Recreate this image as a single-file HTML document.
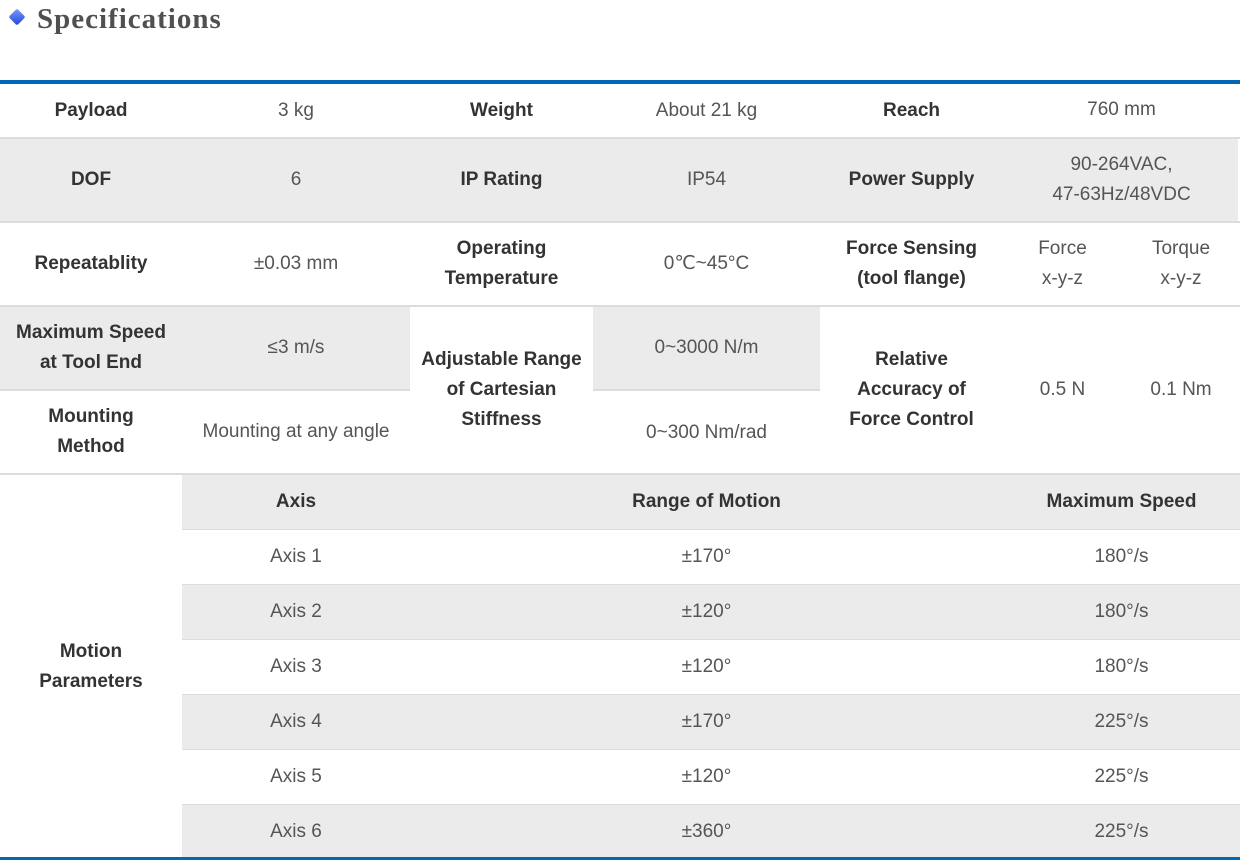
<!DOCTYPE html>
<html><head><meta charset="utf-8"><style>
body{margin:0;width:1240px;height:861px;background:#fff;position:relative;overflow:hidden;font-family:"Liberation Sans","DejaVu Sans",sans-serif;}
.c{position:absolute;display:flex;align-items:center;justify-content:center;text-align:center;font-size:19px;line-height:30px;color:#555;box-sizing:border-box;}
.b{font-weight:bold;color:#333;font-size:19px;}
.g{background:#ebebeb;}
.h{position:absolute;left:0;width:1240px;height:2px;background:#dcdcdc;}
</style></head><body>
<div style="position:absolute;left:11px;top:11px;width:12px;height:12px;background:linear-gradient(135deg,#7a9cff,#2146d8);transform:rotate(45deg);border-radius:2px"></div>
<div style="position:absolute;left:37px;top:3px;font-family:'Liberation Serif',serif;font-weight:bold;font-size:29px;color:#505050;letter-spacing:1px">Specifications</div>
<div style="position:absolute;left:0;top:80px;width:1240px;height:4px;background:#0068b7"></div>

<!-- row1 -->
<div class="c b" style="left:0;top:84px;width:182px;height:53px">Payload</div>
<div class="c" style="left:182px;top:84px;width:228px;height:53px">3 kg</div>
<div class="c b" style="left:410px;top:84px;width:183px;height:53px">Weight</div>
<div class="c" style="left:593px;top:84px;width:227px;height:53px">About 21 kg</div>
<div class="c b" style="left:820px;top:84px;width:183px;height:53px">Reach</div>
<div class="c" style="left:1003px;top:84px;width:237px;height:51px">760 mm</div>
<div class="h" style="top:137px"></div>
<!-- row2 -->
<div class="g" style="position:absolute;left:0;top:139px;width:1238px;height:82px"></div>
<div class="c b" style="left:0;top:139px;width:182px;height:82px">DOF</div>
<div class="c" style="left:182px;top:139px;width:228px;height:82px">6</div>
<div class="c b" style="left:410px;top:139px;width:183px;height:82px">IP Rating</div>
<div class="c" style="left:593px;top:139px;width:227px;height:82px">IP54</div>
<div class="c b" style="left:820px;top:139px;width:183px;height:82px">Power Supply</div>
<div class="c" style="left:1003px;top:139px;width:237px;height:82px">90-264VAC,<br>47-63Hz/48VDC</div>
<div class="h" style="top:221px"></div>
<!-- row3 -->
<div class="c b" style="left:0;top:223px;width:182px;height:82px">Repeatablity</div>
<div class="c" style="left:182px;top:223px;width:228px;height:82px">±0.03 mm</div>
<div class="c b" style="left:410px;top:223px;width:183px;height:82px">Operating<br>Temperature</div>
<div class="c" style="left:593px;top:223px;width:227px;height:82px">0℃~45°C</div>
<div class="c b" style="left:820px;top:223px;width:183px;height:82px">Force Sensing<br>(tool flange)</div>
<div class="c" style="left:1003px;top:223px;width:119px;height:82px">Force<br>x-y-z</div>
<div class="c" style="left:1122px;top:223px;width:118px;height:82px">Torque<br>x-y-z</div>
<div class="h" style="top:305px"></div>
<!-- row4/5 -->
<div class="c b g" style="left:0;top:307px;width:182px;height:82px">Maximum Speed<br>at Tool End</div>
<div class="c g" style="left:182px;top:307px;width:228px;height:82px;padding-bottom:2px;align-items:flex-start;padding-top:26px">≤3 m/s</div>
<div class="c b" style="left:410px;top:307px;width:183px;height:166px">Adjustable Range<br>of Cartesian<br>Stiffness</div>
<div class="c g" style="left:593px;top:307px;width:227px;height:82px;align-items:flex-start;padding-top:26px">0~3000 N/m</div>
<div class="c b" style="left:820px;top:307px;width:183px;height:166px">Relative<br>Accuracy of<br>Force Control</div>
<div class="c" style="left:1003px;top:307px;width:119px;height:166px">0.5 N</div>
<div class="c" style="left:1122px;top:307px;width:118px;height:166px">0.1 Nm</div>
<div style="position:absolute;left:0;top:389px;width:410px;height:2px;background:#dcdcdc"></div>
<div style="position:absolute;left:593px;top:389px;width:227px;height:2px;background:#dcdcdc"></div>
<div class="c b" style="left:0;top:391px;width:182px;height:82px">Mounting<br>Method</div>
<div class="c" style="left:182px;top:391px;width:228px;height:82px">Mounting at any angle</div>
<div class="c" style="left:593px;top:391px;width:227px;height:82px;padding-top:2px">0~300 Nm/rad</div>
<div class="h" style="top:473px"></div>
<!-- motion -->
<div class="c b" style="left:0;top:475px;width:182px;height:383px">Motion<br>Parameters</div>
<div class="g" style="position:absolute;left:182px;top:475px;width:1058px;height:54px"></div>
<div class="c b" style="left:182px;top:475px;width:228px;height:54px">Axis</div>
<div class="c b" style="left:410px;top:475px;width:593px;height:54px">Range of Motion</div>
<div class="c b" style="left:1003px;top:475px;width:237px;height:54px">Maximum Speed</div>
<div style="position:absolute;left:182px;top:529px;width:1058px;height:1px;background:#dcdcdc"></div>

<div style="position:absolute;left:182px;top:530px;width:1058px">
<div style="position:relative;height:55px;border-bottom:1px solid #dcdcdc;box-sizing:border-box"><div class="c" style="left:0;top:0;width:228px;height:54px">Axis 1</div><div class="c" style="left:228px;top:0;width:593px;height:54px">±170°</div><div class="c" style="left:821px;top:0;width:237px;height:54px">180°/s</div></div>
<div class="g" style="position:relative;height:55px;border-bottom:1px solid #dcdcdc;box-sizing:border-box"><div class="c" style="left:0;top:0;width:228px;height:54px">Axis 2</div><div class="c" style="left:228px;top:0;width:593px;height:54px">±120°</div><div class="c" style="left:821px;top:0;width:237px;height:54px">180°/s</div></div>
<div style="position:relative;height:55px;border-bottom:1px solid #dcdcdc;box-sizing:border-box"><div class="c" style="left:0;top:0;width:228px;height:54px">Axis 3</div><div class="c" style="left:228px;top:0;width:593px;height:54px">±120°</div><div class="c" style="left:821px;top:0;width:237px;height:54px">180°/s</div></div>
<div class="g" style="position:relative;height:55px;border-bottom:1px solid #dcdcdc;box-sizing:border-box"><div class="c" style="left:0;top:0;width:228px;height:54px">Axis 4</div><div class="c" style="left:228px;top:0;width:593px;height:54px">±170°</div><div class="c" style="left:821px;top:0;width:237px;height:54px">225°/s</div></div>
<div style="position:relative;height:55px;border-bottom:1px solid #dcdcdc;box-sizing:border-box"><div class="c" style="left:0;top:0;width:228px;height:54px">Axis 5</div><div class="c" style="left:228px;top:0;width:593px;height:54px">±120°</div><div class="c" style="left:821px;top:0;width:237px;height:54px">225°/s</div></div>
<div class="g" style="position:relative;height:53px"><div class="c" style="left:0;top:0;width:228px;height:53px">Axis 6</div><div class="c" style="left:228px;top:0;width:593px;height:53px">±360°</div><div class="c" style="left:821px;top:0;width:237px;height:53px">225°/s</div></div>
</div>
<div style="position:absolute;left:0;top:857px;width:1240px;height:3px;background:#0068b7"></div>
</body></html>
